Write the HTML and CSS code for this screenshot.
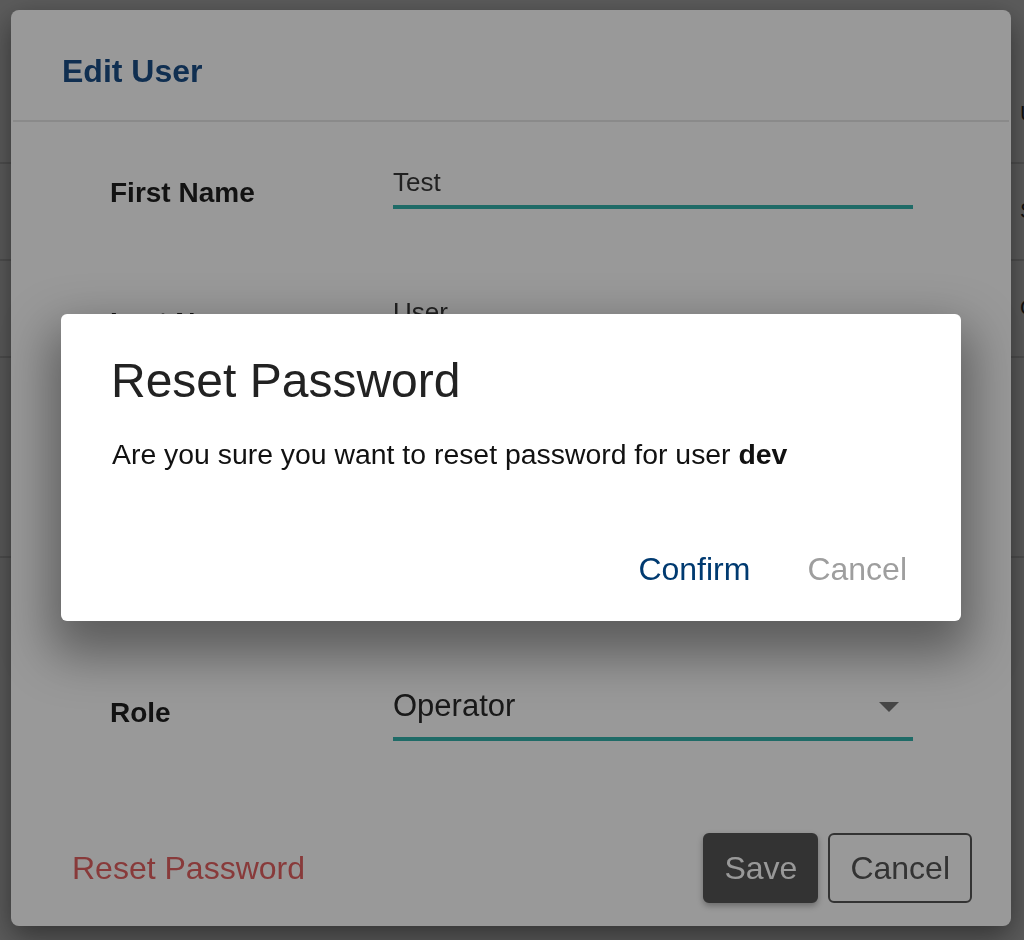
FILE: index.html
```html
<!DOCTYPE html>
<html lang="en">
<head>
<meta charset="utf-8">
<title>Edit User</title>
<link rel="stylesheet" href="styles.css">
</head>
<body>
<div class="page">
  <div class="page-row page-head"><div class="cell"></div><div class="cell">Username</div></div>
  <div class="page-row page-r1"><div class="cell"></div><div class="cell">Super Admin</div></div>
  <div class="page-row page-r1"><div class="cell"></div><div class="cell">Operator</div></div>
  <div class="page-row page-r3"><div class="cell"></div><div class="cell"></div></div>
  <div class="page-row page-last"><div class="cell"></div><div class="cell"></div></div>
</div>

<div class="backdrop"></div>

<div class="edit-modal">
  <div class="edit-header"><h2 class="edit-title">Edit User</h2></div>
  <div class="edit-body">
    <div class="form-row">
      <div class="form-label">First Name</div>
      <div class="field"><span class="field-text">Test</span></div>
    </div>
    <div class="form-row">
      <div class="form-label">Last Name</div>
      <div class="field"><span class="field-text">User</span></div>
    </div>
    <div class="form-row">
      <div class="form-label"></div>
      <div class="field"><span class="field-text"></span></div>
    </div>
    <div class="form-row">
      <div class="form-label"></div>
      <div class="field"><span class="field-text"></span></div>
    </div>
    <div class="form-row">
      <div class="form-label">Role</div>
      <div class="field field-select">
        <span class="select-text">Operator</span>
        <svg class="caret" width="20" height="10" viewBox="0 0 20 10"><path d="M0 0 L20 0 L10 10 Z" fill="#777"/></svg>
      </div>
    </div>
  </div>
  <div class="edit-footer">
    <a class="reset-link">Reset Password</a>
    <div class="footer-buttons">
      <button class="btn btn-save">Save</button>
      <button class="btn btn-outline">Cancel</button>
    </div>
  </div>
</div>

<div class="backdrop"></div>

<div class="confirm-dialog">
  <h2 class="confirm-title">Reset Password</h2>
  <p class="confirm-text">Are you sure you want to reset password for user <b>dev</b></p>
  <div class="confirm-actions">
    <button class="text-btn text-btn-primary">Confirm</button>
    <button class="text-btn text-btn-muted">Cancel</button>
  </div>
</div>
</body>
</html>
```

FILE: styles.css
```css
* { box-sizing: border-box; }

html, body {
  margin: 0;
  padding: 0;
  width: 1024px;
  height: 940px;
  overflow: hidden;
  background: #ffffff;
  font-family: "Liberation Sans", Arial, Helvetica, sans-serif;
  line-height: 1.2;
}

/* background page */
.page {
  width: 1024px;
  height: 940px;
}
.page-row {
  display: grid;
  grid-template-columns: 1020px 1fr;
  align-items: center;
  border-bottom: 2px solid #dcdcdc;
  font-size: 22px;
  color: #333;
  white-space: nowrap;
}
.page-head { height: 164px; padding-top: 66px; }
.page-r1 { height: 97px; }
.page-r3 { height: 200px; }
.page-last { height: 300px; border-bottom: none; }
.cell { overflow: hidden; }

.backdrop {
  position: fixed;
  inset: 0;
  background: rgba(0, 0, 0, 0.4);
}

/* Edit User modal */
.edit-modal {
  position: absolute;
  left: 11px;
  top: 10px;
  width: 1000px;
  height: 916px;
  background: #ffffff;
  border-radius: 8px;
  box-shadow: 0 10px 30px rgba(0, 0, 0, 0.45);
  display: flex;
  flex-direction: column;
}
.edit-header {
  padding: 42px 48px 30px 49px;
  border-bottom: 2px solid #e6e6e6;
  margin: 0 2px;
}
.edit-title {
  margin: 0;
  font-size: 32px;
  font-weight: bold;
  color: #1c4f88;
  line-height: 38.4px;
}
.edit-body {
  padding: 18px 98px 0 97px;
}
.form-row {
  height: 130px;
  display: grid;
  grid-template-columns: 285px 520px;
  align-items: start;
}
.form-label {
  margin-top: 36px;
  padding-left: 2px;
  font-size: 28px;
  font-weight: bold;
  color: #1e1e1e;
  line-height: 33.6px;
  min-height: 33.6px;
}
.field {
  margin-top: 27px;
  border-bottom: 4px solid #34b2ac;
  padding-bottom: 6px;
  display: flex;
  align-items: center;
  justify-content: space-between;
  min-height: 41.2px;
}
.field-text {
  font-size: 26px;
  line-height: 31.2px;
  color: #383838;
}
.field-select { padding-bottom: 12px; }
.select-text {
  font-size: 31px;
  line-height: 37.2px;
  color: #2a2a2a;
}
.caret {
  margin-right: 14px;
  margin-top: 2px;
  display: block;
}

.edit-footer {
  margin-top: auto;
  padding: 0 39px 23px 61px;
  display: flex;
  align-items: center;
  justify-content: space-between;
}
.reset-link {
  font-size: 32px;
  line-height: 38.4px;
  color: #e36262;
}
.footer-buttons {
  display: flex;
  gap: 10px;
}
.btn {
  height: 70px;
  padding: 0 20px;
  font-family: inherit;
  font-size: 32px;
  border-radius: 6px;
  border: 2px solid #555;
  cursor: pointer;
}
.btn-save {
  padding: 0 19px;
  background: #555555;
  color: #ffffff;
  border-color: #555555;
  box-shadow: 0 3px 6px rgba(0, 0, 0, 0.3);
}
.btn-outline {
  background: transparent;
  color: #555555;
}

/* Reset Password dialog */
.confirm-dialog {
  position: absolute;
  left: 61px;
  top: 314px;
  width: 900px;
  height: 307px;
  background: #ffffff;
  border-radius: 6px;
  padding: 38px 54px 33px 50px;
  box-shadow: 0 24px 50px 10px rgba(0, 0, 0, 0.4);
  display: flex;
  flex-direction: column;
}
.confirm-title {
  margin: 0;
  font-size: 48px;
  font-weight: normal;
  line-height: 57.6px;
  color: #222222;
}
.confirm-text {
  margin: 28px 0 0 1px;
  font-size: 28.4px;
  line-height: 33.6px;
  color: #111111;
}
.confirm-actions {
  margin-top: auto;
  display: flex;
  justify-content: flex-end;
  gap: 57px;
}
.text-btn {
  background: none;
  border: none;
  padding: 0;
  font-family: inherit;
  font-size: 32px;
  line-height: 38.4px;
  cursor: pointer;
}
.text-btn-primary { color: #003a70; }
.text-btn-muted { color: #9e9e9e; }
```
